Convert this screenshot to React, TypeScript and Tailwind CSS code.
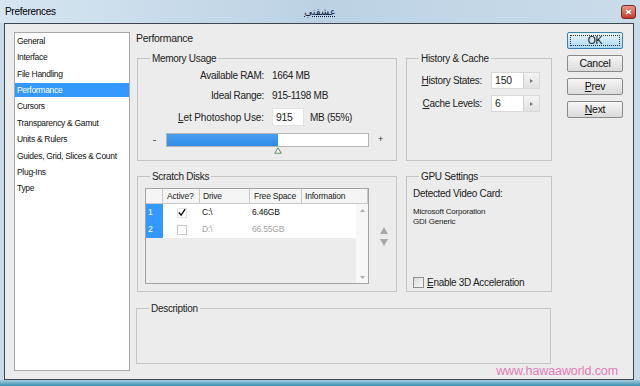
import React from "react";

const navItems = [
  "General",
  "Interface",
  "File Handling",
  "Performance",
  "Cursors",
  "Transparency & Gamut",
  "Units & Rulers",
  "Guides, Grid, Slices & Count",
  "Plug-Ins",
  "Type",
];

function Group({
  title,
  className,
  children,
}: {
  title: string;
  className?: string;
  children?: React.ReactNode;
}) {
  return (
    <div className={`relative border border-[#c4c4c4] ${className ?? ""}`}>
      <span className="absolute left-[12px] top-[-7px] px-[2px] bg-[#ececec] text-[10px] leading-[13px] tracking-[-0.3px] text-[#222]">
        {title}
      </span>
      {children}
    </div>
  );
}

function Btn({ children, primary }: { children: React.ReactNode; primary?: boolean }) {
  return (
    <div
      className={`h-[17px] w-[56px] flex items-center justify-center rounded-[2px] border text-[10.5px] tracking-[-0.3px] ${
        primary
          ? "border-[#3c7fb1] bg-gradient-to-b from-[#eaf6fd] to-[#a7d9f5]"
          : "border-[#8a8a8a] bg-gradient-to-b from-[#f6f6f6] to-[#dadada]"
      }`}
    >
      {primary ? (
        <div className="w-[50px] h-[11px] border border-dotted border-[#333] flex items-center justify-center">
          {children}
        </div>
      ) : (
        children
      )}
    </div>
  );
}

function SpinBox({ value }: { value: string }) {
  return (
    <div className="ml-[9px] flex h-[17px] w-[49px] border border-[#d8d8d8] bg-white">
      <div className="flex-1 pl-[3px] text-[10.5px] leading-[15px] tracking-[-0.2px]">{value}</div>
      <div className="w-[16px] border-l border-[#d0d0d0] bg-gradient-to-b from-[#f4f4f4] to-[#e2e2e2] flex items-center justify-center">
        <svg width="3" height="4" viewBox="0 0 3 4">
          <path d="M0 0 L3 2 L0 4 Z" fill="#777" />
        </svg>
      </div>
    </div>
  );
}

export default function App() {
  return (
    <div className="w-[640px] h-[386px] flex flex-col overflow-hidden bg-[#c9dbe9] font-['Liberation_Sans',Arial,sans-serif] text-black">
      {/* title bar */}
      <div className="h-[23px] grid grid-cols-[1fr_auto_1fr] items-center px-[5px] bg-gradient-to-r from-[#d6e5f1] via-[#bcd2e4] to-[#cadcea]">
        <span className="text-[10px] tracking-[-0.3px] text-black">Preferences</span>
        <span className="text-[10px] underline decoration-dotted text-[#102040] font-['DejaVu_Sans',sans-serif]">
          عشقتي
        </span>
        <div className="justify-self-end mr-[-1px] w-[15px] h-[14px] rounded-[3px] border border-[#7a2a20] bg-gradient-to-b from-[#e59585] to-[#c23a2a] flex items-center justify-center">
          <svg width="7" height="6" viewBox="0 0 7 6">
            <path d="M1 1 L6 5 M6 1 L1 5" stroke="#fff" strokeWidth="1.4" />
          </svg>
        </div>
      </div>

      {/* client */}
      <div className="ml-[4px] w-[630px] h-[357px] border border-[#3d4650] bg-[#ececec] flex pl-[9px] pt-[8px]">
        {/* nav list */}
        <div className="w-[116px] h-[339px] border border-[#a9a9a9] bg-white">
          {navItems.map((n) => (
            <div key={n} className="h-[16.4px] flex items-center">
              <div
                className={`w-full h-[14px] pl-[2px] flex items-center text-[8.5px] tracking-[-0.3px] whitespace-nowrap ${
                  n === "Performance" ? "bg-[#3399ff] text-white" : "text-[#111]"
                }`}
              >
                {n}
              </div>
            </div>
          ))}
        </div>

        {/* right side */}
        <div className="ml-[6px] flex flex-col">
          <div className="flex">
            {/* main column */}
            <div className="w-[416px] flex flex-col">
              <div className="h-[13px] leading-[13px] text-[10.5px] tracking-[-0.3px] text-[#222]">Performance</div>

              <div className="mt-[13px] ml-[1px] flex gap-[9px]">
                <Group title="Memory Usage" className="w-[260px] h-[103px]">
                  <div className="pt-[6px] flex flex-col text-[10px] tracking-[-0.3px] text-[#222]">
                    <div className="h-[20px] flex items-center">
                      <span className="w-[126px] text-right">Available RAM:</span>
                      <span className="ml-[8px]">1664 MB</span>
                    </div>
                    <div className="h-[20px] flex items-center">
                      <span className="w-[126px] text-right">Ideal Range:</span>
                      <span className="ml-[8px]">915-1198 MB</span>
                    </div>
                    <div className="mt-[2px] h-[20px] flex items-center">
                      <span className="w-[126px] text-right tracking-[-0.1px]">
                        <span className="underline">L</span>et Photoshop Use:
                      </span>
                      <div className="ml-[8px] w-[32px] h-[18px] bg-white border border-[#e2e2e2] pl-[3px] text-[10.5px] leading-[16px]">
                        915
                      </div>
                      <span className="ml-[6px]">MB (55%)</span>
                    </div>
                    <div className="mt-[3px] h-[20px] flex items-center">
                      <span className="ml-[15px] w-[3px] h-[1px] bg-[#666]" />
                      <div className="relative ml-[10px] w-[203px] h-[14px] border border-[#b5b5b5] bg-white">
                        <div className="w-[111px] h-full bg-gradient-to-b from-[#4aa0f0] to-[#2f8be6]" />
                        <svg
                          className="absolute left-[107px] top-[13px]"
                          width="8"
                          height="7"
                          viewBox="0 0 8 7"
                        >
                          <path d="M4 0.8 L7.2 6.2 L0.8 6.2 Z" fill="#fff" stroke="#5a8a5a" strokeWidth="1" />
                        </svg>
                      </div>
                      <span className="ml-[9px] text-[9px] text-[#333]">+</span>
                    </div>
                  </div>
                </Group>

                <Group title="History & Cache" className="w-[146px] h-[103px]">
                  <div className="pt-[13px] flex flex-col text-[10px] tracking-[-0.3px] text-[#222]">
                    <div className="h-[17px] flex items-center">
                      <span className="w-[75px] text-right">
                        <span className="underline">H</span>istory States:
                      </span>
                      <SpinBox value="150" />
                    </div>
                    <div className="mt-[6px] h-[17px] flex items-center">
                      <span className="w-[75px] text-right">
                        <span className="underline">C</span>ache Levels:
                      </span>
                      <SpinBox value="6" />
                    </div>
                  </div>
                </Group>
              </div>

              <div className="mt-[15px] ml-[1px] flex gap-[9px]">
                <Group title="Scratch Disks" className="w-[260px] h-[116px]">
                  <div className="mt-[11px] ml-[7px] flex">
                    <div className="w-[224px] h-[96px] border border-[#a3a3a3] flex flex-col bg-[#ececec] text-[8.5px] tracking-[-0.2px]">
                      <div className="h-[15px] flex bg-[#f5f5f5] border-b border-[#c8c8c8] text-[#222]">
                        <div className="w-[17px] border-r border-[#c8c8c8]" />
                        <div className="w-[37px] border-r border-[#c8c8c8] pl-[4px] leading-[14px]">Active?</div>
                        <div className="w-[50px] border-r border-[#c8c8c8] pl-[3px] leading-[14px]">Drive</div>
                        <div className="w-[52px] border-r border-[#c8c8c8] pl-[4px] leading-[14px]">Free Space</div>
                        <div className="flex-1 border-r border-[#c8c8c8] pl-[3px] leading-[14px]">Information</div>
                      </div>
                      <div className="flex-1 flex">
                        <div className="flex-1 flex flex-col">
                          <div className="h-[17px] flex bg-white items-center">
                            <div className="w-[17px] h-full bg-[#3399ff] text-white pl-[2px] leading-[17px]">1</div>
                            <div className="w-[37px] flex justify-center">
                              <div className="w-[10px] h-[10px] border border-[#e4e4e4] flex items-center justify-center">
                                <svg width="9" height="9" viewBox="0 0 9 9">
                                  <path d="M1 4.5 L3.5 7.5 L8 0.8" fill="none" stroke="#111" strokeWidth="1.6" />
                                </svg>
                              </div>
                            </div>
                            <div className="w-[50px] pl-[2px] text-[#111]">C:\</div>
                            <div className="w-[52px] pl-[2px] text-[#111]">6.46GB</div>
                          </div>
                          <div className="h-[17px] flex bg-white items-center">
                            <div className="w-[17px] h-full bg-[#3399ff] text-white pl-[2px] leading-[17px]">2</div>
                            <div className="w-[37px] flex justify-center">
                              <div className="w-[10px] h-[10px] border border-[#c8c8c8]" />
                            </div>
                            <div className="w-[50px] pl-[2px] text-[#a5a5a5]">D:\</div>
                            <div className="w-[52px] pl-[2px] text-[#a5a5a5]">66.55GB</div>
                          </div>
                        </div>
                        <div className="w-[12px] bg-[#f7f7f7] flex flex-col items-center justify-between pt-[5px] pb-[4px]">
                          <svg width="5" height="3" viewBox="0 0 5 3">
                            <path d="M0 3 L2.5 0 L5 3 Z" fill="#b0b0b0" />
                          </svg>
                          <svg width="5" height="3" viewBox="0 0 5 3">
                            <path d="M0 0 L2.5 3 L5 0 Z" fill="#b0b0b0" />
                          </svg>
                        </div>
                      </div>
                    </div>
                    <div className="ml-[11px] mt-[39px] flex flex-col gap-[5px]">
                      <svg width="8" height="7" viewBox="0 0 8 7">
                        <path d="M0 7 L4 0 L8 7 Z" fill="#a8a8a8" />
                      </svg>
                      <svg width="8" height="7" viewBox="0 0 8 7">
                        <path d="M0 0 L4 7 L8 0 Z" fill="#a8a8a8" />
                      </svg>
                    </div>
                  </div>
                </Group>

                <Group title="GPU Settings" className="w-[146px] h-[116px] flex flex-col">
                  <div className="pt-[10px] pl-[6px] h-full flex flex-col pb-[2px]">
                    <div className="h-[13px] leading-[13px] text-[10px] tracking-[-0.3px] text-[#222]">
                      Detected Video Card:
                    </div>
                    <div className="mt-[7px] text-[8px] leading-[9.5px] tracking-[-0.2px] text-[#222]">
                      <div>Microsoft Corporation</div>
                      <div>GDI Generic</div>
                    </div>
                    <div className="mt-auto h-[13px] flex items-center">
                      <div className="w-[11px] h-[11px] border border-[#8e8f8f] bg-gradient-to-br from-[#dcdcdc] to-[#f8f8f8]" />
                      <span className="ml-[3px] text-[10px] tracking-[-0.3px] text-[#222]">
                        <span className="underline">E</span>nable 3D Acceleration
                      </span>
                    </div>
                  </div>
                </Group>
              </div>

              <Group title="Description" className="mt-[16px] w-[415px] h-[56px]" />
            </div>

            {/* buttons */}
            <div className="ml-[15px] flex flex-col gap-[6px] text-[#111]">
              <Btn primary>OK</Btn>
              <Btn>Cancel</Btn>
              <Btn>
                <span>
                  <span className="underline">P</span>rev
                </span>
              </Btn>
              <Btn>
                <span>
                  <span className="underline">N</span>ext
                </span>
              </Btn>
            </div>
          </div>
          <div className="self-end mr-[5px] text-[12.5px] leading-[14px] tracking-[-0.1px] text-[#e47cb6]">
            www.hawaaworld.com
          </div>
        </div>
      </div>

      {/* bottom frame */}
      <div className="flex-1 bg-gradient-to-b from-[#a9cbe0] to-[#2f8fae]" />
    </div>
  );
}
